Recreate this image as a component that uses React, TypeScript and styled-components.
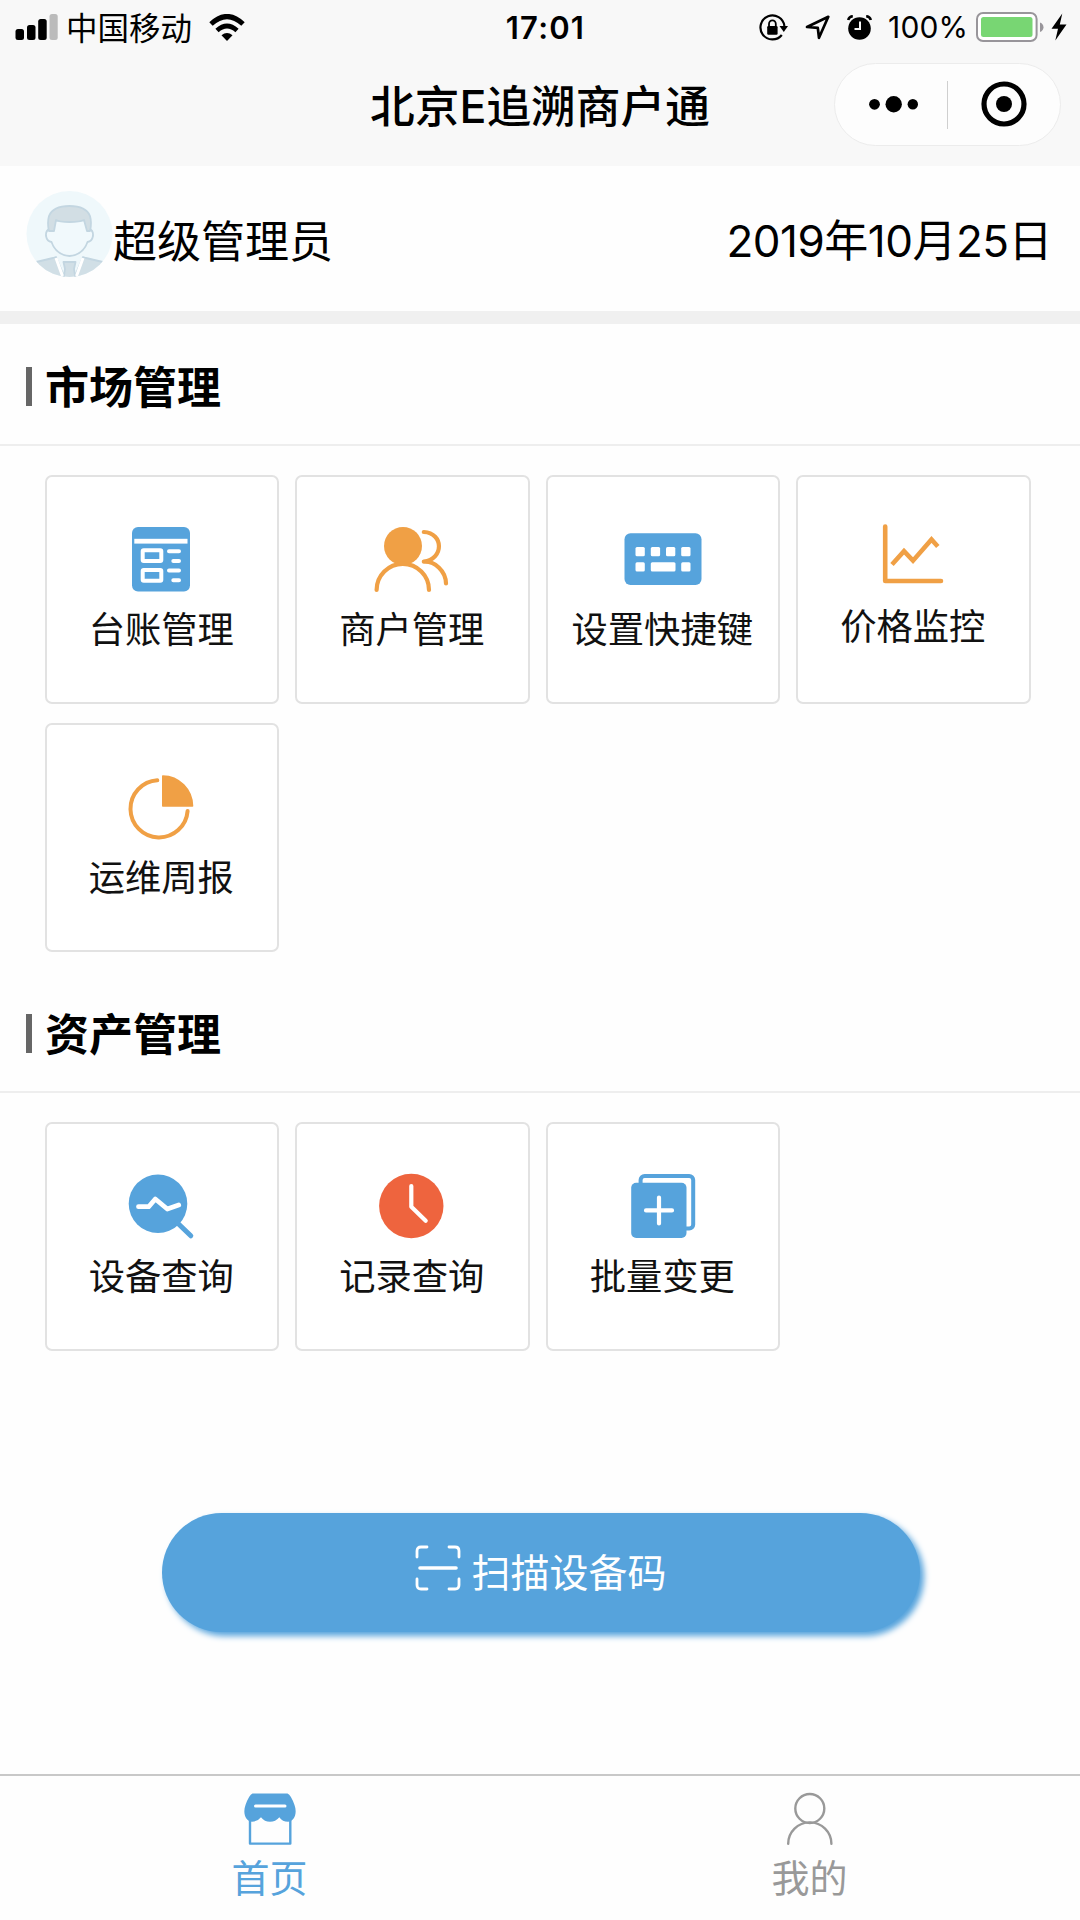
import React from 'react';
import styled, { createGlobalStyle } from 'styled-components';

const BLUE = '#56a3dc';
const ORANGE = '#f0a045';
const RED = '#ee643e';

const GlobalStyle = createGlobalStyle`
  * { box-sizing: border-box; }
  html, body { margin: 0; padding: 0; background: #fff; }
  body { font-family: Inter, 'Noto Sans CJK SC', sans-serif; color: #000; }
`;

const Page = styled.div`
  width: 1080px;
  height: 1920px;
  display: flex;
  flex-direction: column;
  overflow: hidden;
  background: #fefefe;
`;

const Header = styled.header`
  height: 166px;
  flex: none;
  background: #f8f8f8;
`;

const StatusBar = styled.div`
  height: 54px;
  padding: 0 13px 0 15px;
  display: grid;
  grid-template-columns: 1fr auto 1fr;
  align-items: center;
`;

const StatusGroup = styled.div<{ $end?: boolean }>`
  display: flex;
  align-items: center;
  justify-content: ${(p) => (p.$end ? 'flex-end' : 'flex-start')};
`;

const Carrier = styled.span`
  margin: 0 17px 0 7px;
  padding-top: 3px;
  font-size: 31.5px;
  line-height: 51px;
`;

const Clock = styled.span`
  margin-left: 9px;
  font-size: 31px;
  font-weight: 600;
  letter-spacing: 1.2px;
`;

const Percent = styled.span`
  margin: 0 8px 0 16px;
  font-size: 30px;
  letter-spacing: 0.1px;
`;

const Spacer = styled.span<{ $w: number }>`
  width: ${(p) => p.$w}px;
`;

const TitleBar = styled.div`
  height: 112px;
  padding: 9px 19px 0 0;
  display: grid;
  grid-template-columns: 1fr auto 1fr;
  align-items: start;
`;

const Title = styled.h1`
  grid-column: 2;
  margin: 0 0 0 19px;
  padding-top: 2px;
  font-size: 44.7px;
  line-height: 84px;
  font-weight: 500;
`;

const Capsule = styled.div`
  justify-self: end;
  width: 227px;
  height: 83px;
  border: 1.5px solid #ececec;
  border-radius: 42px;
  background: #fdfdfd;
  display: flex;
  align-items: center;
`;

const CapsuleButton = styled.button<{ $w: number }>`
  width: ${(p) => p.$w}px;
  height: 100%;
  border: 0;
  padding: 0 0 1px;
  background: none;
  display: flex;
  align-items: center;
  justify-content: center;
`;

const CapsuleDivider = styled.span`
  width: 1px;
  height: 48px;
  background: #cfcfcf;
`;

const UserRow = styled.section`
  height: 158px;
  flex: none;
  padding: 24px 28px 0 26px;
  border-bottom: 13px solid #f0f0f0;
  display: flex;
  align-items: flex-start;
`;

const UserName = styled.span`
  margin: 9.5px 0 0 -1px;
  font-size: 44px;
  line-height: 84px;
`;

const Today = styled.span`
  margin: 9px 0 0 auto;
  font-size: 44px;
  line-height: 84px;
  letter-spacing: -0.5px;
`;

const Section = styled.section`
  height: 647px;
  flex: none;

  & + & { height: 490px; }
`;

const SectionHead = styled.div`
  height: 122px;
  padding-left: 26px;
  border-bottom: 2px solid #eee;
  display: flex;
  align-items: center;
  gap: 13px;
`;

const Marker = styled.span`
  width: 6px;
  height: 39px;
  margin-top: 5px;
  background: #666;
`;

const SectionTitle = styled.h2`
  margin: 0;
  padding-top: 7px;
  font-size: 44px;
  line-height: 84px;
  font-weight: 700;
`;

const Grid = styled.div`
  padding: 29px 0 0 44.5px;
  display: grid;
  grid-template-columns: repeat(4, 234.5px);
  gap: 19px 16px;
`;

const Card = styled.button`
  height: 229px;
  padding: 44px 0 0;
  border: 2px solid #e2e2e2;
  border-radius: 7px;
  background: #fff;
  font: inherit;
  display: flex;
  flex-direction: column;
  align-items: center;
`;

const CardIcon = styled.svg`
  width: 76px;
  height: 76px;
  flex: none;
  overflow: visible;
`;

const CardLabel = styled.span<{ $lift?: number }>`
  margin-top: ${(p) => 8 - (p.$lift ?? 0)}px;
  padding-right: 1px;
  font-size: 36.3px;
  line-height: 50px;
  color: #111;
  white-space: nowrap;
`;

const ScanButton = styled.button`
  flex: none;
  align-self: flex-start;
  width: 758px;
  height: 119px;
  margin: 52px 0 0 162px;
  padding: 0;
  border: 0;
  border-radius: 60px;
  background: ${BLUE};
  box-shadow: 4px 4px 6px ${BLUE};
  color: #fff;
  font: inherit;
  font-size: 39px;
  display: flex;
  align-items: center;
  justify-content: center;
  gap: 10px;
`;

const ScanIcon = styled.svg`
  margin-bottom: 9px;
`;

const ScanLabel = styled.span`
  padding-bottom: 5px;
`;

const TabBar = styled.nav`
  margin-top: auto;
  height: 146px;
  flex: none;
  border-top: 2px solid #c8c8c8;
  display: grid;
  grid-template-columns: 1fr 1fr;
`;

const Tab = styled.a<{ $active?: boolean }>`
  padding-top: 16px;
  display: flex;
  flex-direction: column;
  align-items: center;
  gap: 4px;
  color: ${(p) => (p.$active ? BLUE : '#999')};
  font-size: 38px;
  line-height: 56px;
`;

const TabLabel = styled.span`
  padding-right: 1px;
`;

const Signal = () => (
  <svg width="44" height="28" viewBox="0 0 44 28">
    <rect x="0.5" y="16" width="8.5" height="11" rx="2.5" />
    <rect x="12" y="12" width="8.5" height="15" rx="2.5" />
    <rect x="23.2" y="6" width="8.5" height="21" rx="2.5" />
    <rect x="34.5" y="1" width="8.2" height="26" rx="2.5" fill="#bbb" />
  </svg>
);

const Wifi = () => (
  <svg width="36" height="27" viewBox="0 0 36 27">
    <path d="M2 10 Q18 -5 34 10" fill="none" stroke="#000" strokeWidth="5" />
    <path d="M8 16.5 Q18 7.5 28 16.5" fill="none" stroke="#000" strokeWidth="4.8" />
    <path d="M12.5 21.3 Q18 16.8 23.5 21.3 L18 27 Z" />
  </svg>
);

const RotationLock = () => (
  <svg width="29" height="27" viewBox="0 0 29 27">
    <path d="M25.4 12 A12 12 0 1 0 22.8 21" fill="none" stroke="#000" strokeWidth="2.2" />
    <path d="M20.5 12 H29 L24.8 18 Z" />
    <rect x="8.2" y="12" width="10.4" height="8.8" rx="1.2" />
    <path d="M10 12.5 V10 a3.4 3.6 0 0 1 6.8 0 V12.5" fill="none" stroke="#000" strokeWidth="1.8" />
  </svg>
);

const Location = () => (
  <svg width="25" height="25" viewBox="0 0 25 25">
    <path d="M2 12 L23.3 1.8 L14 22.8 L12.8 12.8 Z" fill="none" stroke="#000" strokeWidth="2.7" strokeLinejoin="round" />
  </svg>
);

const Alarm = () => (
  <svg width="25" height="25" viewBox="0 0 25 25">
    <circle cx="12.5" cy="13.5" r="11.3" />
    <path d="M1.2 5 Q2.2 1.5 5.8 1.2 M23.8 5 Q22.8 1.5 19.2 1.2" fill="none" stroke="#000" strokeWidth="2.6" />
    <path d="M13 6.5 V14 H7.5" fill="none" stroke="#f8f8f8" strokeWidth="2" />
  </svg>
);

const Battery = () => (
  <svg width="68" height="30" viewBox="0 0 68 30">
    <rect x="1" y="1" width="59.6" height="28" rx="6" fill="#fff" stroke="#98959a" strokeWidth="2" />
    <rect x="5" y="5" width="51.5" height="20" rx="2.5" fill="#78d673" />
    <path d="M64 10.5 Q67.5 12 67.5 15.3 T64 20 Z" fill="#98959a" />
  </svg>
);

const Bolt = () => (
  <svg width="16" height="28" viewBox="0 0 16 28">
    <path d="M11.3 0.5 L0.5 15.7 H7 L4.3 27.5 L15.5 11.5 H8.8 Z" />
  </svg>
);

const Avatar = () => (
  <svg width="88" height="88" viewBox="0 0 88 88">
    <clipPath id="avatarClip"><circle cx="43.5" cy="44" r="43" /></clipPath>
    <circle cx="43.5" cy="44" r="43" fill="#eff8fb" />
    <g clipPath="url(#avatarClip)" stroke="#c3d6e1" strokeWidth="1.8" strokeLinejoin="round">
      <path d="M6 73 L27 68 L30 67 L38 86 V92 H4 Z M81 73 L60 68 L57 67 L49 86 V92 H83 Z" fill="#d1dfe6" />
      <path d="M37.5 72 H49.5 L48 79 L50 92 H37 L39 79 Z" fill="#d1dfe6" />
      <path d="M30 68 L36.5 86 M57 68 L50.5 86" stroke="#fff" strokeWidth="3" fill="none" />
      <path d="M24 39 Q19.5 40 20 46 Q21 51.5 25.5 52 Q30 65 43.5 66 Q57 65 61.5 52 Q66 51.5 67 46 Q67.5 40 63 39 L58 30 H29 Z" fill="#f1f9fc" />
      <path d="M23 41 Q21 33 23 26 Q27 16 43.5 16 Q60 16 64 26 Q66 33 64 41 L61 41 L58 30 Q54 32 43.5 32 Q33 32 30 30 L28 41 Z" fill="#d2dee4" />
    </g>
  </svg>
);

const LedgerIcon = () => (
  <CardIcon viewBox="0 0 76 76">
    <rect x="8" y="6" width="58" height="64.5" rx="6" fill={BLUE} />
    <rect x="10.3" y="17.8" width="53.2" height="4.8" fill="#fff" />
    <g fill="none" stroke="#fff" strokeWidth="4">
      <rect x="18.7" y="29.3" width="18.6" height="10.8" rx="1" />
      <rect x="18.7" y="48.9" width="18.6" height="10.8" rx="1" />
      <path strokeLinecap="round" d="M45 30.2 H55 M49.3 39.9 H55 M45 49.6 H55 M49.3 59.3 H55" />
    </g>
  </CardIcon>
);

const MerchantsIcon = () => (
  <CardIcon viewBox="0 0 76 76">
    <circle cx="29" cy="25" r="19" fill={ORANGE} />
    <path
      d="M2.6 69 A26.2 26.2 0 0 1 55 69 M49.8 11 C70 12 70 38 49.8 40.7 C61 40 71.8 50 72 62.5"
      fill="none" stroke={ORANGE} strokeWidth="4.2" strokeLinecap="round" strokeLinejoin="round"
    />
  </CardIcon>
);

const KeyboardIcon = () => (
  <CardIcon viewBox="0 0 76 76">
    <rect x="-0.5" y="12.3" width="77" height="51.8" rx="6" fill={BLUE} />
    <g fill="#fff">
      {[10.5, 25.8, 41, 56.2].map((x) => <rect key={x} x={x} y="26" width="9.3" height="9.3" rx="1.5" />)}
      <rect x="10.5" y="41.3" width="9.3" height="9.3" rx="1.5" />
      <rect x="25.8" y="41.3" width="24.7" height="9.3" rx="1.5" />
      <rect x="56.2" y="41.3" width="9.3" height="9.3" rx="1.5" />
    </g>
  </CardIcon>
);

const ChartIcon = () => (
  <CardIcon viewBox="0 0 76 76">
    <g fill="none" stroke={ORANGE} strokeWidth="4.6">
      <path d="M10.2 5.5 V60 H66" strokeLinecap="round" strokeLinejoin="round" />
      <path d="M17 43.5 L29 30.2 L38 39.7 L56.5 18.5 L62.8 25.5" />
    </g>
  </CardIcon>
);

const PieIcon = () => (
  <CardIcon viewBox="0 0 76 76">
    <path d="M38.8 7 A30 30.5 0 0 1 68.5 37 H38.8 Z" fill={ORANGE} stroke={ORANGE} strokeWidth="1.6" strokeLinejoin="round" />
    <path d="M33.3 11.3 A28.6 28.6 0 1 0 63.6 42" fill="none" stroke={ORANGE} strokeWidth="4" strokeLinecap="round" />
  </CardIcon>
);

const DeviceSearchIcon = () => (
  <CardIcon viewBox="0 0 76 76">
    <circle cx="34" cy="35.8" r="29.3" fill={BLUE} />
    <path d="M53 54.5 L66.8 67.8" stroke={BLUE} strokeWidth="5" strokeLinecap="round" />
    <path d="M14.5 38.7 H24.7 L31.3 31 L43.3 41 L54.7 37" fill="none" stroke="#fff" strokeWidth="4.8" strokeLinecap="round" strokeLinejoin="round" />
  </CardIcon>
);

const RecordIcon = () => (
  <CardIcon viewBox="0 0 76 76">
    <circle cx="37.3" cy="38" r="32.2" fill={RED} />
    <path d="M37.3 18 V38.8 L51.7 52.7" fill="none" stroke="#fff" strokeWidth="4.2" strokeLinecap="round" strokeLinejoin="round" />
  </CardIcon>
);

const BatchIcon = () => (
  <CardIcon viewBox="0 0 76 76">
    <rect x="15.6" y="8" width="52.6" height="52.4" rx="4" fill="none" stroke={BLUE} strokeWidth="4" />
    <rect x="6.2" y="14.7" width="55.3" height="55.3" rx="5" fill={BLUE} />
    <path d="M34 29.5 V55.5 M21 42.4 H47" stroke="#fff" strokeWidth="4.2" strokeLinecap="round" />
  </CardIcon>
);

const HomeIcon = () => (
  <svg width="54" height="54" viewBox="0 0 54 54">
    <path d="M7 24 V51.6 H47.3 V24" fill="none" stroke={BLUE} strokeWidth="2.4" strokeLinejoin="round" />
    <path d="M9.5 1.5 H44.5 Q48 3 51.5 13 C54.5 21 51.5 29.7 45 29.7 Q39.5 29.7 36.3 25.2 Q32.5 29.8 27 29.8 Q21.5 29.8 18 25.2 Q14.5 29.7 9 29.7 C2.5 29.7 -0.5 21 2.5 13 Q6 3 9.5 1.5 Z" fill={BLUE} />
    <path d="M12.5 14 H42" stroke="#fff" strokeWidth="3" strokeLinecap="round" />
  </svg>
);

const MineIcon = () => (
  <svg width="54" height="54" viewBox="0 0 54 54">
    <g fill="none" stroke="#999" strokeWidth="2.4" strokeLinecap="round">
      <circle cx="26.8" cy="16.5" r="14.5" />
      <path d="M5.2 51.8 A21.6 21.4 0 0 1 48.4 51.8" />
    </g>
  </svg>
);

interface Entry {
  label: string;
  Icon: React.FC;
  lift?: number;
}

const market: Entry[] = [
  { label: '台账管理', Icon: LedgerIcon },
  { label: '商户管理', Icon: MerchantsIcon },
  { label: '设置快捷键', Icon: KeyboardIcon },
  { label: '价格监控', Icon: ChartIcon, lift: 3 },
  { label: '运维周报', Icon: PieIcon },
];

const assets: Entry[] = [
  { label: '设备查询', Icon: DeviceSearchIcon },
  { label: '记录查询', Icon: RecordIcon },
  { label: '批量变更', Icon: BatchIcon },
];

const EntrySection = ({ title, entries }: { title: string; entries: Entry[] }) => (
  <Section>
    <SectionHead>
      <Marker />
      <SectionTitle>{title}</SectionTitle>
    </SectionHead>
    <Grid>
      {entries.map(({ label, Icon, lift }) => (
        <Card key={label}>
          <Icon />
          <CardLabel $lift={lift}>{label}</CardLabel>
        </Card>
      ))}
    </Grid>
  </Section>
);

export default function App() {
  return (
    <>
      <GlobalStyle />
      <Page lang="zh-CN">
        <Header>
          <StatusBar>
            <StatusGroup>
              <Signal />
              <Carrier>中国移动</Carrier>
              <Wifi />
            </StatusGroup>
            <Clock>17:01</Clock>
            <StatusGroup $end>
              <RotationLock />
              <Spacer $w={17} />
              <Location />
              <Spacer $w={17} />
              <Alarm />
              <Percent>100%</Percent>
              <Battery />
              <Spacer $w={7} />
              <Bolt />
            </StatusGroup>
          </StatusBar>
          <TitleBar>
            <Title>北京E追溯商户通</Title>
            <Capsule>
              <CapsuleButton $w={112} aria-label="更多">
                <svg width="56" height="18" viewBox="0 0 56 18">
                  <circle cx="11.5" cy="9.3" r="5.4" />
                  <circle cx="30.7" cy="9.3" r="8.2" />
                  <circle cx="49.8" cy="9.3" r="5.2" />
                </svg>
              </CapsuleButton>
              <CapsuleDivider />
              <CapsuleButton $w={112} aria-label="关闭">
                <svg width="46" height="46" viewBox="0 0 46 46">
                  <circle cx="23" cy="23" r="20" fill="none" stroke="#000" strokeWidth="5.2" />
                  <circle cx="23" cy="23" r="8" />
                </svg>
              </CapsuleButton>
            </Capsule>
          </TitleBar>
        </Header>
        <UserRow>
          <Avatar />
          <UserName>超级管理员</UserName>
          <Today>2019年10月25日</Today>
        </UserRow>
        <EntrySection title="市场管理" entries={market} />
        <EntrySection title="资产管理" entries={assets} />
        <ScanButton>
          <ScanIcon width="46" height="46" viewBox="0 0 46 46" fill="none" stroke="#fff" strokeWidth="2.8" strokeLinecap="round">
            <path d="M2 12 V6 Q2 2 6 2 H12 M34 2 H40 Q44 2 44 6 V12 M44 34 V40 Q44 44 40 44 H34 M12 44 H6 Q2 44 2 40 V34" />
            <path d="M5 23 H41" strokeWidth="3.6" />
          </ScanIcon>
          <ScanLabel>扫描设备码</ScanLabel>
        </ScanButton>
        <TabBar>
          <Tab $active>
            <HomeIcon />
            <TabLabel>首页</TabLabel>
          </Tab>
          <Tab>
            <MineIcon />
            <TabLabel>我的</TabLabel>
          </Tab>
        </TabBar>
      </Page>
    </>
  );
}
